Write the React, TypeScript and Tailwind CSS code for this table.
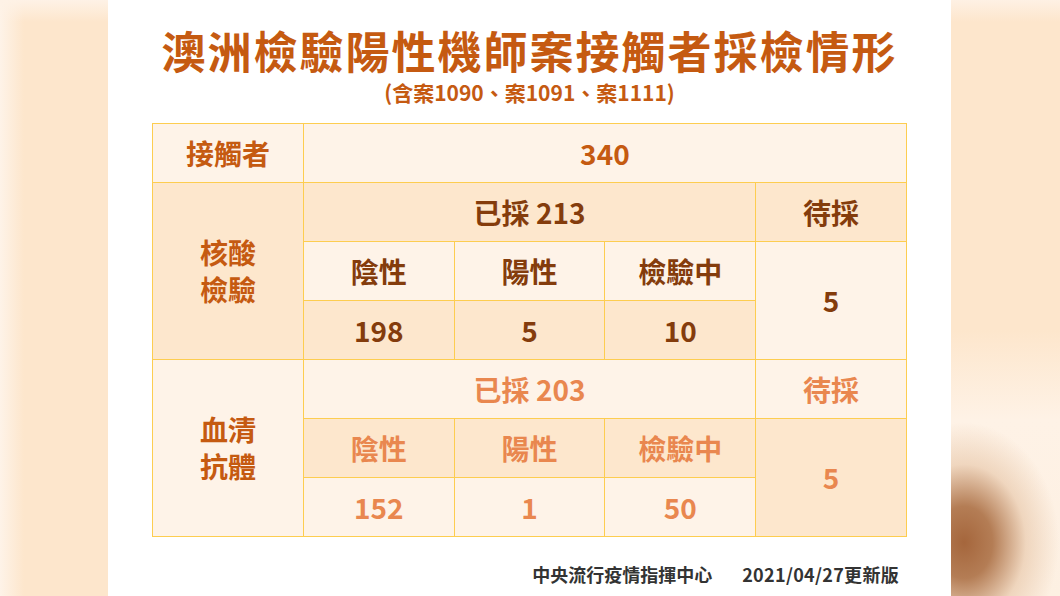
const font = "font-['Noto_Sans_CJK_TC','Noto_Sans',sans-serif]"

type Cell = {
  text: string[]
  col: string
  row: string
  tone: 'light' | 'dark'
  color: string
}

const LABEL = 'text-[#c55a11]'
const NAT = 'text-[#843c0c]'
const SER = 'text-[#e9874f]'

const cells: Cell[] = [
  { text: ['接觸者'], col: 'col-start-1', row: 'row-start-1', tone: 'light', color: LABEL },
  { text: ['340'], col: 'col-start-2 col-span-4', row: 'row-start-1', tone: 'light', color: LABEL },

  { text: ['核酸', '檢驗'], col: 'col-start-1', row: 'row-start-2 row-span-3', tone: 'dark', color: LABEL },
  { text: ['已採 213'], col: 'col-start-2 col-span-3', row: 'row-start-2', tone: 'dark', color: NAT },
  { text: ['待採'], col: 'col-start-5', row: 'row-start-2', tone: 'dark', color: NAT },
  { text: ['陰性'], col: 'col-start-2', row: 'row-start-3', tone: 'light', color: NAT },
  { text: ['陽性'], col: 'col-start-3', row: 'row-start-3', tone: 'light', color: NAT },
  { text: ['檢驗中'], col: 'col-start-4', row: 'row-start-3', tone: 'light', color: NAT },
  { text: ['5'], col: 'col-start-5', row: 'row-start-3 row-span-2', tone: 'light', color: NAT },
  { text: ['198'], col: 'col-start-2', row: 'row-start-4', tone: 'dark', color: NAT },
  { text: ['5'], col: 'col-start-3', row: 'row-start-4', tone: 'dark', color: NAT },
  { text: ['10'], col: 'col-start-4', row: 'row-start-4', tone: 'dark', color: NAT },

  { text: ['血清', '抗體'], col: 'col-start-1', row: 'row-start-5 row-span-3', tone: 'light', color: LABEL },
  { text: ['已採 203'], col: 'col-start-2 col-span-3', row: 'row-start-5', tone: 'light', color: SER },
  { text: ['待採'], col: 'col-start-5', row: 'row-start-5', tone: 'light', color: SER },
  { text: ['陰性'], col: 'col-start-2', row: 'row-start-6', tone: 'dark', color: SER },
  { text: ['陽性'], col: 'col-start-3', row: 'row-start-6', tone: 'dark', color: SER },
  { text: ['檢驗中'], col: 'col-start-4', row: 'row-start-6', tone: 'dark', color: SER },
  { text: ['5'], col: 'col-start-5', row: 'row-start-6 row-span-2', tone: 'dark', color: SER },
  { text: ['152'], col: 'col-start-2', row: 'row-start-7', tone: 'light', color: SER },
  { text: ['1'], col: 'col-start-3', row: 'row-start-7', tone: 'light', color: SER },
  { text: ['50'], col: 'col-start-4', row: 'row-start-7', tone: 'light', color: SER },
]

export default function App() {
  return (
    <div className={`flex h-[596px] w-[1060px] overflow-hidden bg-white ${font}`}>
      <div className="w-[108px] shrink-0 bg-[linear-gradient(to_bottom,#fef2e6_0px,rgba(253,230,204,0)_22px),linear-gradient(to_right,#fef3e8_0px,#fde6cc_24px,#fde6cc_100%)]" />

      <div className="flex flex-1 flex-col items-center px-[44px]">
        <h1 className="mt-[28px] text-[44px] leading-[44px] font-bold tracking-[2px] text-[#c55a11]">
          澳洲檢驗陽性機師案接觸者採檢情形
        </h1>
        <p className="mt-[10px] text-[21px] leading-[21px] font-bold text-[#c55a11]">
          (含案1090、案1091、案1111)
        </p>

        <div className="mt-[20px] grid w-full grid-cols-5 grid-rows-[repeat(7,58px)] gap-px bg-[#fdcd50] p-px">
          {cells.map((c, i) => (
            <div
              key={i}
              className={`${c.col} ${c.row} flex flex-col items-center justify-center ${
                c.tone === 'light' ? 'bg-[#fef3e8]' : 'bg-[#fde7cd]'
              } ${c.color} text-[28px] leading-[37px] font-bold`}
            >
              {c.text.map((t) => (
                <span key={t}>{t}</span>
              ))}
            </div>
          ))}
        </div>

        <div className="mt-[28px] flex w-full justify-end gap-[30px] pr-[8px] text-[18px] leading-none font-semibold text-[#333333]">
          <span>中央流行疫情指揮中心</span>
          <span className="tracking-[0.3px]">2021/04/27更新版</span>
        </div>
      </div>

      <div className="w-[109px] shrink-0 bg-[radial-gradient(ellipse_95px_120px_at_12%_91%,#a5663c_0%,#b47d55_30%,rgba(230,196,165,0.6)_65%,rgba(254,242,230,0)_100%),linear-gradient(to_bottom,#fef1e4_0px,#fde6cc_22px,#fde6cc_330px,#fef2e6_420px,#fdf0e2_596px)]" />
    </div>
  )
}
